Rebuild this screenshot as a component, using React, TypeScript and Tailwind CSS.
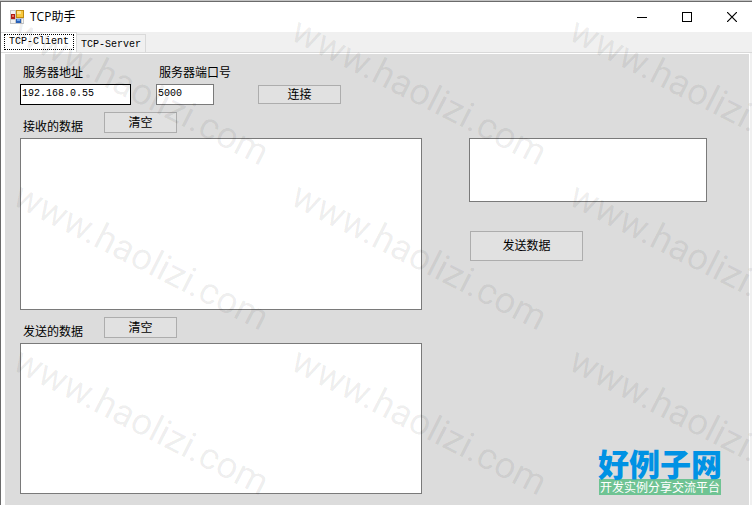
import type { ReactNode } from "react";

const TextLabel = ({ htmlFor, children }: { htmlFor: string; children: ReactNode }) => {
    return (
        <label htmlFor={htmlFor} className="block pl-[3px] whitespace-nowrap">
            {children}
        </label>
    );
};

const PushButton = ({ className, children }: { className: string; children: ReactNode }) => {
    return (
        <button
            type="button"
            className={`flex items-center justify-center border border-[#adadad] bg-[#e1e1e1] pt-[2px] leading-none ${className}`}
        >
            {children}
        </button>
    );
};

const AppIcon = () => {
    return (
        <svg viewBox="0 0 14 14" className="h-3.5 w-3.5" shapeRendering="crispEdges" aria-hidden="true">
            <rect width="14" height="14" fill="#c8c8c8" />
            <rect x="1" y="1" width="4" height="3" fill="#f4f4f4" />
            <rect x="1" y="10" width="4" height="3" fill="#f4f4f4" />
            <rect x="12" y="9" width="1" height="4" fill="#f4f4f4" />
            <rect x="1" y="4" width="4" height="5" fill="#b01c14" />
            <rect x="2" y="5" width="2" height="2" fill="#e8705c" />
            <rect x="6" y="0" width="8" height="8" fill="#c08a10" />
            <rect x="7" y="1" width="6" height="6" fill="#f8c83c" />
            <rect x="7" y="1" width="4" height="3" fill="#fde48c" />
            <rect x="6" y="9" width="5" height="4" fill="#2860b8" />
            <rect x="7" y="9" width="3" height="2" fill="#6fa4ec" />
        </svg>
    );
};

const TitleBar = () => {
    return (
        <header className="flex h-[30px] items-center justify-between bg-white pr-[15px] pl-[9px]">
            <div className="flex items-center gap-[6px]">
                <AppIcon />
                <h1 className="font-['Open_Sans','Noto_Sans_CJK_SC',sans-serif] text-[12px] leading-4">TCP助手</h1>
            </div>
            <div className="flex items-center gap-[35px]">
                <button type="button" aria-label="最小化">
                    <svg width="10" height="11" shapeRendering="crispEdges">
                        <path d="M0 5.5H10" stroke="#000" />
                    </svg>
                </button>
                <button type="button" aria-label="最大化">
                    <svg width="10" height="10" shapeRendering="crispEdges">
                        <rect x="0.5" y="0.5" width="9" height="9" fill="none" stroke="#000" />
                    </svg>
                </button>
                <button type="button" aria-label="关闭">
                    <svg width="10" height="10">
                        <path d="M0 0L10 10M10 0L0 10" stroke="#000" strokeWidth="1.2" />
                    </svg>
                </button>
            </div>
        </header>
    );
};

const TabStrip = () => {
    return (
        <div
            role="tablist"
            className="flex h-[21px] items-end border-b border-[#d9d9d9] font-['Liberation_Mono',monospace] text-[10px] leading-none"
        >
            <button
                type="button"
                role="tab"
                aria-selected="true"
                className="h-full border-t border-r border-[#d9d9d9] bg-white pr-[2px] pb-[2px] pl-[3px]"
            >
                <span className="flex h-4 items-center border border-dotted border-black px-1">TCP-Client</span>
            </button>
            <button
                type="button"
                role="tab"
                aria-selected="false"
                className="h-[18px] border-t border-r border-[#d9d9d9] px-1 pt-[2px]"
            >
                TCP-Server
            </button>
        </div>
    );
};

const Logo = () => {
    return (
        <a href="#" className="block w-[124px] text-center whitespace-nowrap">
            <span className="block font-['Noto_Sans_CJK_SC',sans-serif] text-[31px] leading-8 font-black text-[#0092e4]">
                好例子网
            </span>
            <span className="mx-px block bg-[#6fc393] font-['Noto_Sans_CJK_SC',sans-serif] text-[12px] leading-4 text-white">
                开发实例分享交流平台
            </span>
        </a>
    );
};

const Watermark = () => {
    return (
        <div
            aria-hidden="true"
            className="pointer-events-none absolute inset-0 grid auto-rows-[165px] grid-cols-[repeat(3,278px)] overflow-hidden pt-1 pl-[6px] font-[Roboto,sans-serif] text-[37px] leading-10 text-black/7"
        >
            {Array.from({ length: 9 }, (_, i) => (
                <span key={i} className="block h-10 origin-bottom-left rotate-27">
                    www.haolizi.com
                </span>
            ))}
        </div>
    );
};

const App = () => {
    return (
        <div className="bg-[#c4c4c4] pt-px">
            <div className="relative flex min-h-[calc(100vh-1px)] flex-col overflow-hidden border-t border-l border-[#6b6b6b] bg-[#f0f0f0] font-['Liberation_Mono','Noto_Sans_CJK_SC',monospace] text-[12px] leading-4 text-black">
                <TitleBar />
                <TabStrip />
                <main className="mr-[2px] flex flex-1 items-start justify-between border-t border-r border-l-4 border-white bg-[#dcdcdc] pr-[42px] pb-[10px] pl-[15px]">
                    <section className="w-[402px]">
                        <div className="flex items-end pt-3">
                            <div className="w-[136px]">
                                <TextLabel htmlFor="host">服务器地址</TextLabel>
                                <input
                                    id="host"
                                    defaultValue="192.168.0.55"
                                    className="mt-[2px] block h-[21px] w-[111px] border border-black bg-white px-px pb-[2px] text-[10px]"
                                />
                            </div>
                            <div className="w-[102px]">
                                <TextLabel htmlFor="port">服务器端口号</TextLabel>
                                <input
                                    id="port"
                                    defaultValue="5000"
                                    className="mt-[2px] block h-[21px] w-[58px] border border-[#7a7a7a] bg-white px-px pb-[2px] text-[10px]"
                                />
                            </div>
                            <PushButton className="mb-px h-[19px] w-[83px]">连接</PushButton>
                        </div>
                        <div className="mt-[7px] flex h-[26px] items-start">
                            <div className="w-[84px] pt-2">
                                <TextLabel htmlFor="received">接收的数据</TextLabel>
                            </div>
                            <PushButton className="h-[21px] w-[73px]">清空</PushButton>
                        </div>
                        <textarea
                            id="received"
                            className="block h-[172px] w-full resize-none border border-[#7a7a7a] bg-white"
                        />
                        <div className="mt-[7px] flex h-[26px] items-start">
                            <div className="w-[84px] pt-2">
                                <TextLabel htmlFor="sent">发送的数据</TextLabel>
                            </div>
                            <PushButton className="h-[21px] w-[73px]">清空</PushButton>
                        </div>
                        <textarea
                            id="sent"
                            className="block h-[151px] w-full resize-none border border-[#7a7a7a] bg-white"
                        />
                    </section>
                    <section className="flex w-[238px] flex-col self-stretch pt-[84px]">
                        <textarea
                            aria-label="发送内容"
                            className="block h-16 w-full resize-none border border-[#7a7a7a] bg-white"
                        />
                        <PushButton className="mt-[29px] ml-px h-[30px] w-[113px]">发送数据</PushButton>
                        <div className="mt-auto ml-[129px]">
                            <Logo />
                        </div>
                    </section>
                </main>
                <Watermark />
            </div>
        </div>
    );
};

export default App;
